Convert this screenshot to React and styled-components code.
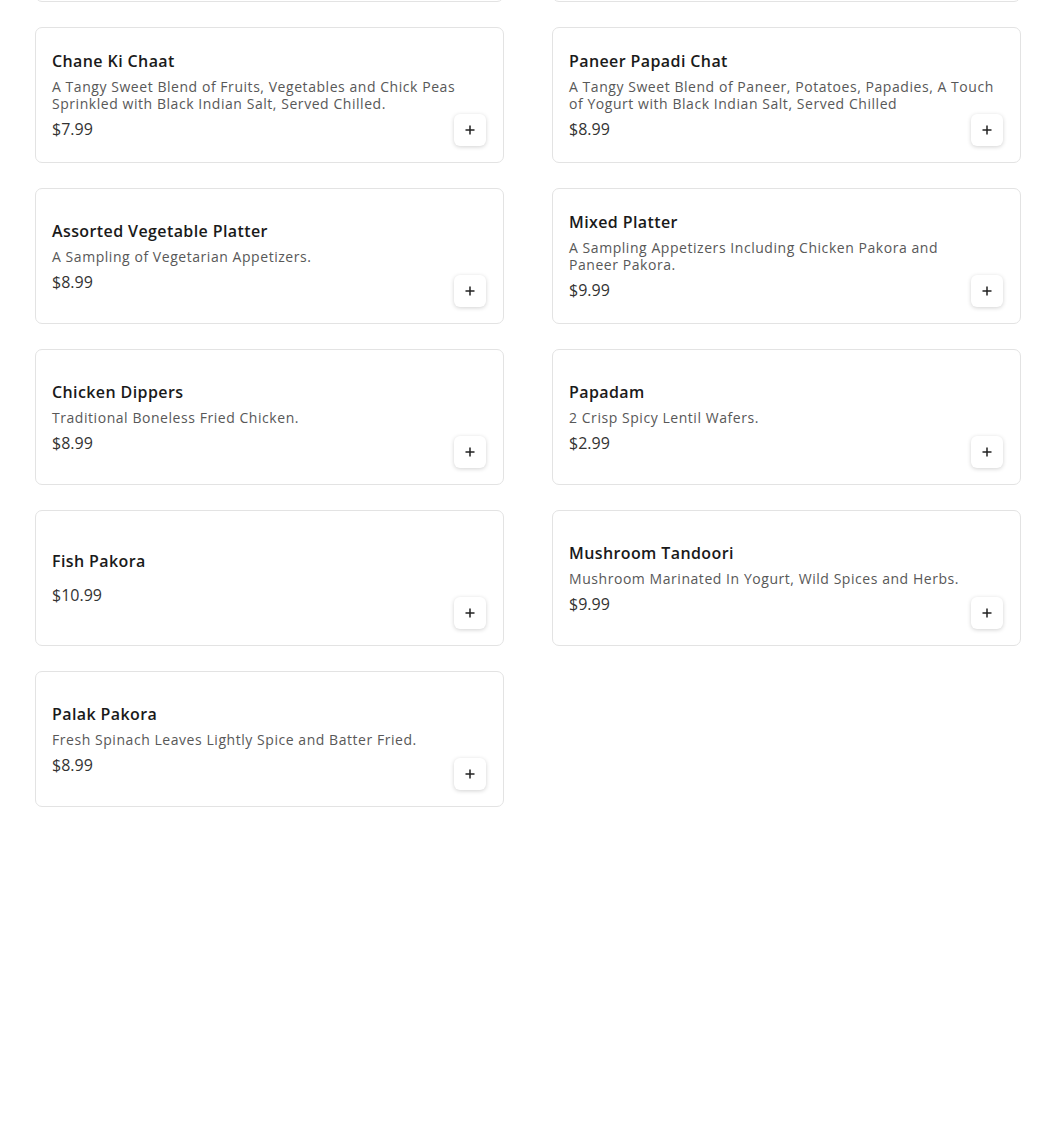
import React from "react";
import styled, { createGlobalStyle } from "styled-components";

const Global = createGlobalStyle`
  html, body { margin: 0; padding: 0; background: #fff; }
  body { font-family: "Open Sans", "Liberation Sans", sans-serif; color: #111; }
  * { box-sizing: border-box; }
`;

const Page = styled.div`
  width: 1050px;
  overflow: hidden;
  height: 1146px;
`;

const Grid = styled.div`
  margin-top: -134px;
  padding-left: 35px;
  display: grid;
  grid-template-columns: 469px 469px;
  column-gap: 48px;
  row-gap: 25px;
`;

const Card = styled.div`
  position: relative;
  height: 136px;
  border: 1px solid #e3e3e3;
  border-radius: 7px;
  background: #fff;
  padding: 16px;
  display: flex;
  flex-direction: column;
  justify-content: center;
`;

const Title = styled.div`
  font-size: 16px;
  font-weight: 600;
  line-height: 20px;
  color: #1a1a1a;
  margin-bottom: 7px;
  letter-spacing: 0.4px;
`;

const Desc = styled.div`
  font-size: 14px;
  line-height: 17px;
  color: #585858;
  margin-bottom: 7px;
  padding-right: 8px;
  letter-spacing: 0.55px;
  text-wrap: pretty;
`;

const Price = styled.div`
  font-size: 16px;
  line-height: 20px;
  color: #333;
`;

const AddButton = styled.button`
  position: absolute;
  right: 17px;
  bottom: 16px;
  width: 32px;
  height: 32px;
  border: none;
  border-radius: 6px;
  background: #fff;
  box-shadow: 0 1px 4px rgba(0, 0, 0, 0.18);
  display: flex;
  align-items: center;
  justify-content: center;
  padding: 0;
  cursor: pointer;
`;

const PlusIcon = () => (
  <svg width="10" height="10" viewBox="0 0 10 10">
    <path d="M5 0.5v9M0.5 5h9" stroke="#222" strokeWidth="1.5" fill="none" />
  </svg>
);

const items = [
  { id: "prev-1" },
  { id: "prev-2" },
  {
    title: "Chane Ki Chaat",
    desc: "A Tangy Sweet Blend of Fruits, Vegetables and Chick Peas Sprinkled with Black Indian Salt, Served Chilled.",
    price: "$7.99",
  },
  {
    title: "Paneer Papadi Chat",
    desc: "A Tangy Sweet Blend of Paneer, Potatoes, Papadies, A Touch of Yogurt with Black Indian Salt, Served Chilled",
    price: "$8.99",
  },
  { title: "Assorted Vegetable Platter", desc: "A Sampling of Vegetarian Appetizers.", price: "$8.99" },
  {
    title: "Mixed Platter",
    desc: "A Sampling Appetizers Including Chicken Pakora and Paneer Pakora.",
    price: "$9.99",
  },
  { title: "Chicken Dippers", desc: "Traditional Boneless Fried Chicken.", price: "$8.99" },
  { title: "Papadam", desc: "2 Crisp Spicy Lentil Wafers.", price: "$2.99" },
  { title: "Fish Pakora", desc: "", price: "$10.99" },
  { title: "Mushroom Tandoori", desc: "Mushroom Marinated In Yogurt, Wild Spices and Herbs.", price: "$9.99" },
  { title: "Palak Pakora", desc: "Fresh Spinach Leaves Lightly Spice and Batter Fried.", price: "$8.99" },
];

export default function App() {
  return (
    <Page>
      <Global />
      <Grid>
        {items.map((it) =>
          it.title ? (
            <Card key={it.title}>
              <Title>{it.title}</Title>
              <Desc>{it.desc}</Desc>
              <Price>{it.price}</Price>
              <AddButton aria-label={`Add ${it.title}`}>
                <PlusIcon />
              </AddButton>
            </Card>
          ) : (
            <Card key={it.id} />
          )
        )}
      </Grid>
    </Page>
  );
}
